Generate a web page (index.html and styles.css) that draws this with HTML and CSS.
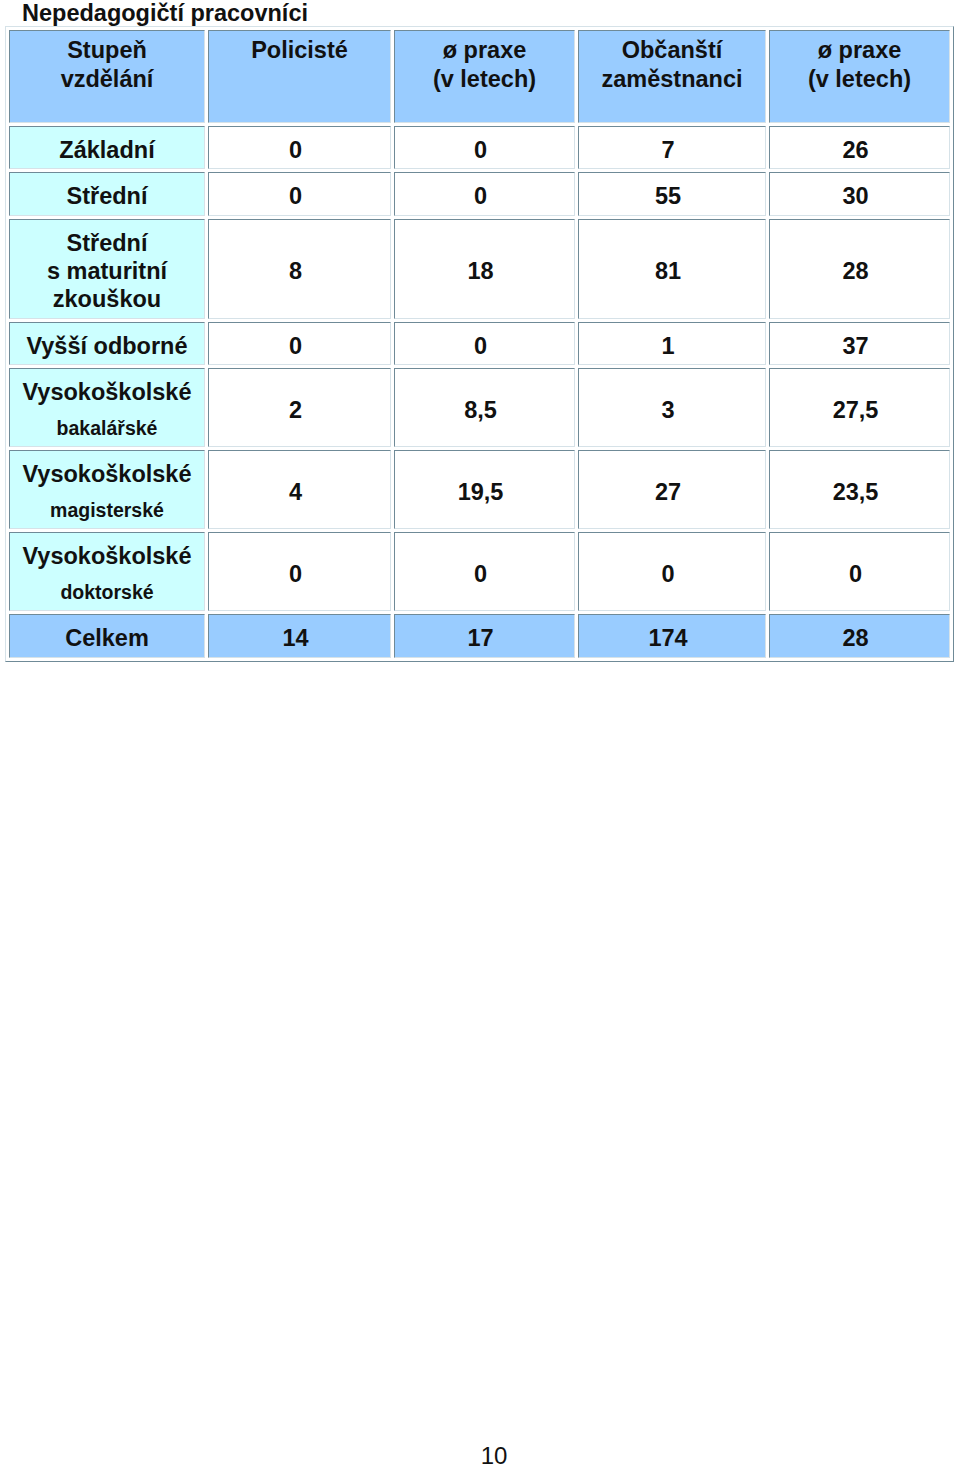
FILE: index.html
```html
<!DOCTYPE html>
<html lang="cs">
<head>
<meta charset="utf-8">
<title>Nepedagogičtí pracovníci</title>
<link rel="stylesheet" href="styles.css">
</head>
<body>
<div class="page">
  <div class="content">
    <h1 class="title">Nepedagogičtí pracovníci</h1>
    <table class="stats">
      <colgroup>
        <col class="c1"><col class="c2"><col class="c3"><col class="c4"><col class="c5">
      </colgroup>
      <tr class="r-head">
        <th class="head">Stupeň<br>vzdělání</th>
        <th class="head">Policisté</th>
        <th class="head">ø praxe<br>(v letech)</th>
        <th class="head">Občanští<br>zaměstnanci</th>
        <th class="head">ø praxe<br>(v letech)</th>
      </tr>
      <tr class="r43">
        <td class="label">Základní</td>
        <td class="num">0</td><td class="num">0</td><td class="num">7</td><td class="num">26</td>
      </tr>
      <tr class="r44">
        <td class="label">Střední</td>
        <td class="num">0</td><td class="num">0</td><td class="num">55</td><td class="num">30</td>
      </tr>
      <tr class="r100">
        <td class="label">Střední<br>s maturitní<br>zkouškou</td>
        <td class="num">8</td><td class="num">18</td><td class="num">81</td><td class="num">28</td>
      </tr>
      <tr class="r43">
        <td class="label">Vyšší odborné</td>
        <td class="num">0</td><td class="num">0</td><td class="num">1</td><td class="num">37</td>
      </tr>
      <tr class="r79">
        <td class="label"><div class="l-main">Vysokoškolské</div><div class="l-sub">bakalářské</div></td>
        <td class="num">2</td><td class="num">8,5</td><td class="num">3</td><td class="num">27,5</td>
      </tr>
      <tr class="r79">
        <td class="label"><div class="l-main">Vysokoškolské</div><div class="l-sub">magisterské</div></td>
        <td class="num">4</td><td class="num">19,5</td><td class="num">27</td><td class="num">23,5</td>
      </tr>
      <tr class="r79">
        <td class="label"><div class="l-main">Vysokoškolské</div><div class="l-sub">doktorské</div></td>
        <td class="num">0</td><td class="num">0</td><td class="num">0</td><td class="num">0</td>
      </tr>
      <tr class="r44 total">
        <td class="label">Celkem</td>
        <td class="num">14</td><td class="num">17</td><td class="num">174</td><td class="num">28</td>
      </tr>
    </table>
  </div>
  <div class="pagenum">10</div>
</div>
</body>
</html>
```

FILE: styles.css
```css
html, body {
  margin: 0;
  padding: 0;
  background: #ffffff;
}

body {
  font-family: "Liberation Sans", Arial, sans-serif;
  color: #111111;
  overflow: hidden;
}

.page {
  height: 1469px;
  display: flex;
  flex-direction: column;
}

.content {
  padding-left: 5px;
}

.title {
  margin: 0 0 0 17px;
  font-size: 23.5px;
  font-weight: bold;
  line-height: 26px;
}

.stats {
  table-layout: fixed;
  width: 949px;
  border-collapse: separate;
  border-spacing: 3px;
  border-style: solid;
  border-width: 1px;
  border-color: #d6e2e8 #6f8a97 #6f8a97 #d6e2e8;
  font-size: 23.5px;
  font-weight: bold;
}

.c1 { width: 196px; }
.c2 { width: 183px; }
.c3 { width: 181px; }
.c4 { width: 188px; }
.c5 { width: 181px; }

.stats th,
.stats td {
  box-sizing: border-box;
  border-style: solid;
  border-width: 1px;
  border-color: #6f8a97 #d6e2e8 #d6e2e8 #6f8a97;
  text-align: center;
  padding: 0;
}

.r-head { height: 93px; }
.r43 { height: 43px; }
.r44 { height: 44px; }
.r100 { height: 100px; }
.r79 { height: 79px; }

.stats .head {
  background: #99ccff;
  vertical-align: top;
  line-height: 29px;
  padding-top: 5px;
  font-weight: bold;
}

.stats td {
  vertical-align: middle;
  line-height: 28px;
  padding-top: 4px;
}

.stats .label {
  background: #ccffff;
}

.stats .num {
  background: #ffffff;
  padding-right: 8px;
}

.stats .total .label,
.stats .total .num {
  background: #99ccff;
}

.l-main {
  line-height: 36px;
}

.l-sub {
  font-size: 19.5px;
  line-height: 36px;
}

.pagenum {
  margin-top: auto;
  padding-left: 28px;
  text-align: center;
  font-size: 24px;
  line-height: 26px;
  height: 26px;
}
```
